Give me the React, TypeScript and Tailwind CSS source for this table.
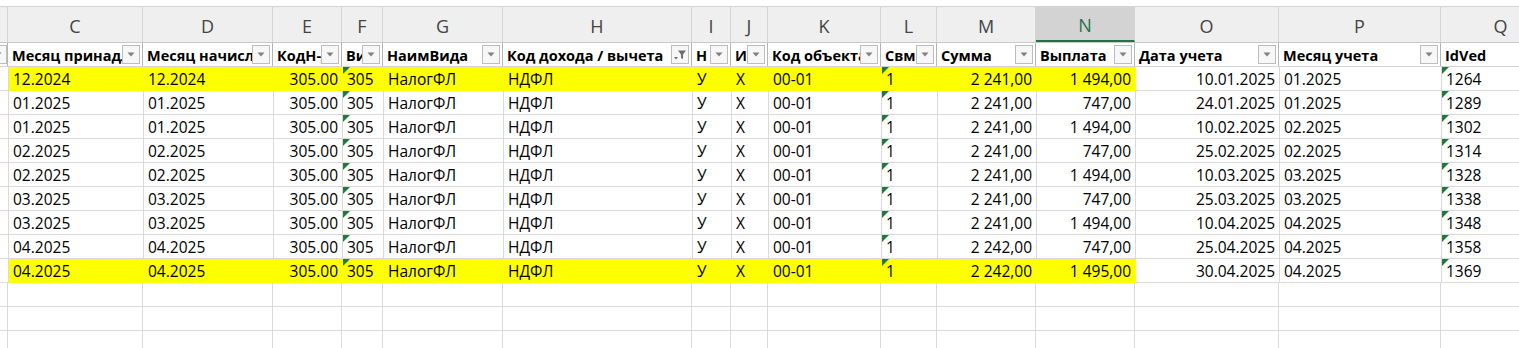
import React from "react";

const cols = [
  { key: "B", w: 8 },
  { key: "C", w: 135, title: "Месяц принадлежности", align: "left" },
  { key: "D", w: 130, title: "Месяц начисления", align: "left" },
  { key: "E", w: 69, title: "КодН-ДФЛ", align: "right" },
  { key: "F", w: 41, title: "Вид", align: "left", tri: true },
  { key: "G", w: 120, title: "НаимВида", align: "left" },
  { key: "H", w: 189, title: "Код дохода / вычета", align: "left", filtered: true },
  { key: "I", w: 39, title: "Н", align: "left" },
  { key: "J", w: 37, title: "И", align: "left" },
  { key: "K", w: 113, title: "Код объекта", align: "left" },
  { key: "L", w: 56, title: "Свм", align: "left", tri: true },
  { key: "M", w: 99, title: "Сумма", align: "right" },
  { key: "N", w: 99, title: "Выплата", align: "right" },
  { key: "O", w: 144, title: "Дата учета", align: "right" },
  { key: "P", w: 162, title: "Месяц учета", align: "left" },
  { key: "Q", w: 120, title: "IdVed", align: "left", tri: true, noBtn: true },
];

const rows: { v: string[]; hl?: boolean }[] = [
  { v: ["12.2024", "12.2024", "2 241,00", "1 494,00", "10.01.2025", "01.2025", "1264"], hl: true },
  { v: ["01.2025", "01.2025", "2 241,00", "747,00", "24.01.2025", "01.2025", "1289"] },
  { v: ["01.2025", "01.2025", "2 241,00", "1 494,00", "10.02.2025", "02.2025", "1302"] },
  { v: ["02.2025", "02.2025", "2 241,00", "747,00", "25.02.2025", "02.2025", "1314"] },
  { v: ["02.2025", "02.2025", "2 241,00", "1 494,00", "10.03.2025", "03.2025", "1328"] },
  { v: ["03.2025", "03.2025", "2 241,00", "747,00", "25.03.2025", "03.2025", "1338"] },
  { v: ["03.2025", "03.2025", "2 241,00", "1 494,00", "10.04.2025", "04.2025", "1348"] },
  { v: ["04.2025", "04.2025", "2 242,00", "747,00", "25.04.2025", "04.2025", "1358"] },
  { v: ["04.2025", "04.2025", "2 242,00", "1 495,00", "30.04.2025", "04.2025", "1369"], hl: true },
];

function cellValues(r: { v: string[] }) {
  const [c, d, m, n, o, p, q] = r.v;
  return ["", c, d, "305.00", "305", "НалогФЛ", "НДФЛ", "У", "Х", "00-01", "1", m, n, o, p, q];
}

function FilterBtn({ filtered }: { filtered?: boolean }) {
  return (
    <div className="w-[18px] h-[19px] shrink-0 border border-[#bdbdbd] bg-[#f7f7f7] flex items-center justify-center">
      {filtered ? (
        <svg width="14" height="12" viewBox="0 0 14 12">
          <path d="M1 8 L5 8 L3 10.5 Z" fill="#6d6d6d" />
          <path d="M5 1.5 L13 1.5 L10 5.5 L10 10 L8 9 L8 5.5 Z" fill="#6d6d6d" />
        </svg>
      ) : (
        <svg width="8" height="5" viewBox="0 0 8 5">
          <path d="M0.5 0.5 L7.5 0.5 L4 4.5 Z" fill="#808080" />
        </svg>
      )}
    </div>
  );
}

function GreenTri() {
  return (
    <svg className="absolute left-0 top-0" width="7" height="7" viewBox="0 0 7 7">
      <path d="M0 0 L7 0 L0 7 Z" fill="#1f7a3c" />
    </svg>
  );
}

export default function App() {
  const font = { fontFamily: '"Open Sans", "Noto Sans", sans-serif' };
  return (
    <div className="w-[1519px] h-[348px] overflow-hidden bg-white text-[15.5px] text-black" style={font}>
      <div className="h-[7px] bg-white border-b border-[#d4d4d4]" />
      {/* column letters */}
      <div className="flex h-[36px] bg-[#efefef] border-b border-[#c9c9c9]">
        {cols.map((c) => (
          <div
            key={c.key}
            className={
              c.key === "N"
                ? "shrink-0 h-full flex items-center justify-center pt-[3px] border-r border-[#d4d4d4] bg-[#d3d3d3] text-[#217346] border-b-2 border-b-[#217346] text-[18px]"
                : "shrink-0 h-full flex items-center justify-center pt-[3px] border-r border-[#d4d4d4] text-[#444] text-[18px]"
            }
            style={{ width: c.w }}
          >
            {c.key === "B" ? "" : c.key}
          </div>
        ))}
      </div>
      {/* table header */}
      <div className="flex h-[24px] border-b border-[#d4d4d4]">
        {cols.map((c) => (
          <div
            key={c.key}
            className="shrink-0 h-full flex items-center border-r border-[#b5b5b5] overflow-hidden bg-white"
            style={{ width: c.w }}
          >
            {c.key === "B" ? (
              <div className="flex justify-end w-full -mr-[12px]">
                <FilterBtn />
              </div>
            ) : (
              <>
                <span className="flex-1 min-w-0 overflow-hidden whitespace-nowrap font-bold text-[14.5px] pl-[4px] pt-[3px] leading-normal">
                  {c.title}
                </span>
                {!c.noBtn && (
                  <div className="shrink-0 pr-[2px]">
                    <FilterBtn filtered={c.filtered} />
                  </div>
                )}
              </>
            )}
          </div>
        ))}
      </div>
      {/* data */}
      {rows.map((r, ri) => {
        const vals = cellValues(r);
        return (
          <div key={ri} className="flex h-[24px]">
            {cols.map((c, ci) => {
              const yellow = r.hl && ci >= 1 && ci <= 12;
              return (
                <div
                  key={c.key}
                  className={
                    "relative shrink-0 h-full flex items-center overflow-hidden whitespace-nowrap px-[4px] pt-[2px] border-r border-b " +
                    (yellow ? "bg-[#ffff00] border-[#ffff00]" : "bg-white border-[#d9d9d9]") +
                    (c.align === "right" ? " justify-end" : " justify-start")
                  }
                  style={{ width: c.w }}
                >
                  {c.tri && <GreenTri />}
                  {vals[ci]}
                </div>
              );
            })}
          </div>
        );
      })}
      {[0, 1, 2].map((i) => (
        <div key={"e" + i} className="flex h-[24px]">
          {cols.map((c) => (
            <div
              key={c.key}
              className="shrink-0 h-full border-r border-b border-[#d9d9d9] bg-white"
              style={{ width: c.w }}
            />
          ))}
        </div>
      ))}
    </div>
  );
}
